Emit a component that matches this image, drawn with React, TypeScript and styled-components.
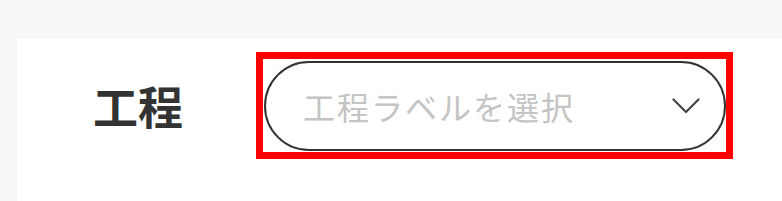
import styled, { createGlobalStyle } from 'styled-components';

const GlobalStyle = createGlobalStyle`
  html, body {
    margin: 0;
    padding: 0;
    height: 100%;
    background: #f8f8f8;
    overflow: hidden;
    font-family: "Noto Sans CJK JP", "Noto Sans", sans-serif;
  }
`

export default function App() {
  return (
    <>
      <GlobalStyle />
      <Card>
        <Row>
          <Label>工程</Label>
          <Highlight>
            <SelectPill>
              <Placeholder>工程ラベルを選択</Placeholder>
              <svg width="28" height="16" viewBox="0 0 28 16" fill="none">
                <path d="M1.5 1.5 L14 14 L26.5 1.5" stroke="#444" strokeWidth="2.2" strokeLinecap="round" strokeLinejoin="round" />
              </svg>
            </SelectPill>
          </Highlight>
        </Row>
      </Card>
    </>
  )
}

const Card = styled.div`
  margin: 38px 0 0 17px;
  height: calc(100vh - 38px);
  background: #ffffff;
  box-shadow: 0 0 2px rgba(0, 0, 0, 0.06);
  padding: 14px 0 0 76px;
  box-sizing: border-box;
`

const Row = styled.div`
  display: flex;
  align-items: center;
`

const Label = styled.div`
  width: 90px;
  margin-right: 73px;
  font-size: 45px;
  font-weight: 700;
  color: #333333;
  line-height: 1;
`

const Highlight = styled.div`
  border: 7px solid #ff0000;
  padding: 2px 0 1px 1px;
  display: flex;
`

const SelectPill = styled.div`
  width: 462px;
  height: 90px;
  box-sizing: border-box;
  border: 2.5px solid #333333;
  border-radius: 45px;
  display: flex;
  align-items: center;
  justify-content: space-between;
  padding: 0 24px 0 37px;
`

const Placeholder = styled.span`
  font-size: 32px;
  letter-spacing: 2px;
  color: #c4c4c4;
  line-height: 1;
`
